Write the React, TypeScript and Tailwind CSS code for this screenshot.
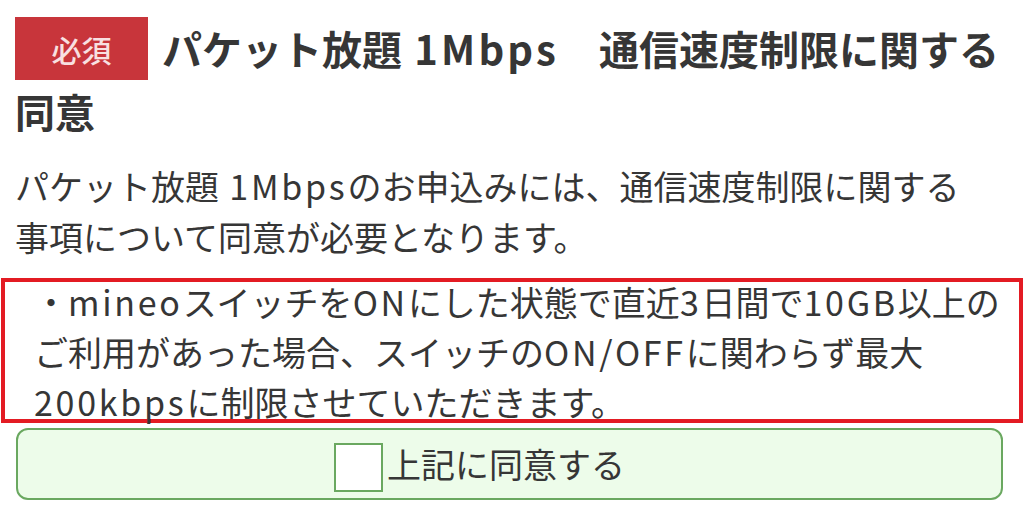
import React from "react";

// 英数字はヒラギノより幅が狭いので少し字間を広げる
const L: React.FC<{ children: React.ReactNode }> = ({ children }) => (
  <span className="tracking-[0.08em]">{children}</span>
);

const App: React.FC = () => {
  return (
    <div className="w-[1024px] h-[514px] overflow-hidden bg-white text-[#363636] font-['Noto_Sans_CJK_JP','Noto_Sans',sans-serif]">
      <div className="px-[15px] pt-[17px]">
        {/* 見出し */}
        <h2 className="text-[40px] font-bold leading-[63px]">
          <span className="inline-flex items-center justify-center align-top w-[133px] h-[63px] mr-[14px] bg-[#c8353b] text-[30px] font-medium leading-none text-[#f8e0e1]">
            必須
          </span>
          パケット放題<L> 1Mbps</L>　通信速度制限に関する
          <br />
          同意
        </h2>

        {/* 説明 */}
        <p className="mt-[17px] text-[34px] leading-[51px]">
          パケット放題<L> 1Mbps</L>のお申込みには、通信速度制限に関する
          <br />
          事項について同意が必要となります。
        </p>

        {/* 注意事項 */}
        <div className="-mx-[14px] mt-[16px] h-[145px] border-4 border-[#e31b23] pl-[29px]">
          <p className="-mt-[5px] text-[34px] leading-[50px]">
            ・<L>mineo</L>スイッチを<L>ON</L>にした状態で直近<L>3</L>日間で<L>10GB</L>以上の
            <br />
            ご利用があった場合、スイッチの<L>ON/OFF</L>に関わらず最大
            <br />
            <L>200kbps</L>に制限させていただきます。
          </p>
        </div>

        {/* 同意チェック */}
        <label className="ml-[1px] mt-[5px] flex h-[72px] w-[987px] items-center justify-center rounded-[12px] border-2 border-[#6aa860] bg-[#edfcea] pr-[60px]">
          <span className="mt-[6px] h-[49px] w-[49px] shrink-0 border-2 border-[#6aa860] bg-white" />
          <span className="ml-[4px] text-[34px] leading-none">上記に同意する</span>
        </label>
      </div>
    </div>
  );
};

export default App;
